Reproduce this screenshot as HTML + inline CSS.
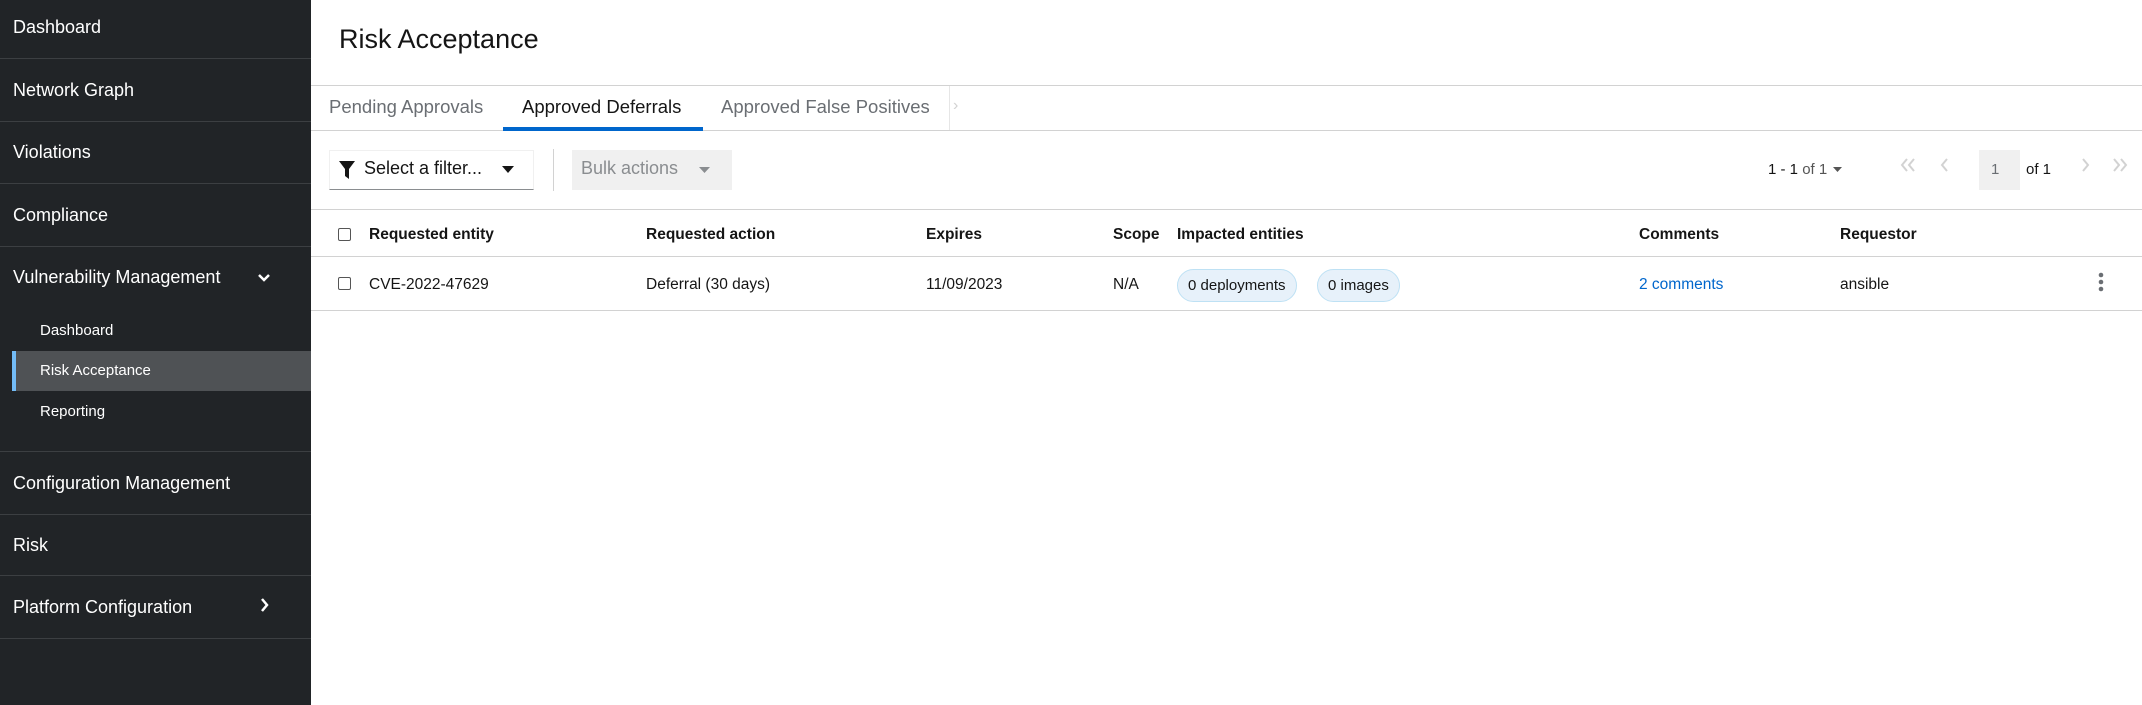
<!DOCTYPE html>
<html><head><meta charset="utf-8"><style>
*{box-sizing:border-box;margin:0;padding:0}
body{width:2142px;height:705px;overflow:hidden;font-family:"Liberation Sans",sans-serif;background:#fff;color:#151515;position:relative}
.sb{position:absolute;left:0;top:0;width:311px;height:705px;background:#212427;color:#fff}
.it{position:absolute;left:0;width:311px;border-bottom:1px solid #3c3f42;font-size:18px}
.it span{position:absolute;left:13px}
.sub{position:absolute;left:40px;font-size:15px;color:#fff}
.a{position:absolute}
.hd{font-size:15.5px;font-weight:bold}
.td{font-size:15.5px;color:#151515}
.chip{position:absolute;height:33px;border:1px solid #bee1f4;background:#e7f1fa;border-radius:17px;font-size:15px;line-height:31px;padding:0 10px;color:#151515;top:269px}
.cb{position:absolute;width:13px;height:13px;border:1px solid #555;border-radius:2px;left:338px}
.tab{position:absolute;top:96px;font-size:18.5px}
</style></head><body>
<div class="sb">
 <div class="it" style="top:0;height:59px"><span style="top:17px">Dashboard</span></div>
 <div class="it" style="top:59px;height:63px"><span style="top:21px">Network Graph</span></div>
 <div class="it" style="top:122px;height:62px"><span style="top:20px">Violations</span></div>
 <div class="it" style="top:184px;height:63px"><span style="top:21px">Compliance</span></div>
 <div class="it" style="top:247px;height:205px"><span style="top:20px">Vulnerability Management</span>
  <svg style="position:absolute;left:258px;top:26px" width="12" height="10" viewBox="0 0 12 10"><path d="M1 2l5 5 5-5" stroke="#fff" stroke-width="2.5" fill="none"/></svg></div>
 <div class="sub" style="top:322px">Dashboard</div>
 <div style="position:absolute;left:12px;top:351px;width:299px;height:40px;background:#4f5255;border-left:4px solid #73bcf7"></div>
 <div class="sub" style="top:362px">Risk Acceptance</div>
 <div class="sub" style="top:403px">Reporting</div>
 <div class="it" style="top:452px;height:63px"><span style="top:21px">Configuration Management</span></div>
 <div class="it" style="top:515px;height:61px"><span style="top:20px">Risk</span></div>
 <div class="it" style="top:576px;height:63px"><span style="top:21px">Platform Configuration</span>
  <svg style="position:absolute;left:260px;top:22px" width="10" height="14" viewBox="0 0 10 14"><path d="M2 1l5 6-5 6" stroke="#fff" stroke-width="2.5" fill="none"/></svg></div>
</div>
<div class="a" style="left:339px;top:24px;font-size:27px">Risk Acceptance</div>
<div class="a" style="left:311px;top:85px;width:1831px;height:1px;background:#d2d2d2"></div>
<div class="a" style="left:311px;top:130px;width:1831px;height:1px;background:#d2d2d2"></div>
<div class="tab" style="left:329px;color:#6a6e73">Pending Approvals</div>
<div class="tab" style="left:522px;color:#151515">Approved Deferrals</div>
<div class="tab" style="left:721px;color:#6a6e73">Approved False Positives</div>
<div class="a" style="left:503px;top:127px;width:200px;height:4px;background:#06c"></div>
<div class="a" style="left:949px;top:86px;width:1px;height:44px;background:#e6e6e6"></div>
<div class="a" style="left:953px;top:97px;font-size:16px;color:#d2d2d2">›</div>
<div class="a" style="left:329px;top:150px;width:205px;height:40px;border:1px solid #f0f0f0;border-bottom:1px solid #8a8d90"></div>
<svg class="a" style="left:338px;top:160px" width="18" height="20" viewBox="0 0 18 20"><path d="M1 1h16l-6 8v10l-4-3v-7z" fill="#151515"/></svg>
<div class="a" style="left:364px;top:158px;font-size:18px">Select a filter...</div>
<svg class="a" style="left:502px;top:166px" width="12" height="8"><path d="M0 0h12l-6 7z" fill="#151515"/></svg>
<div class="a" style="left:553px;top:149px;width:1px;height:42px;background:#d2d2d2"></div>
<div class="a" style="left:572px;top:150px;width:160px;height:40px;background:#f0f0f0"></div>
<div class="a" style="left:581px;top:158px;font-size:18px;color:#8a8d90">Bulk actions</div>
<svg class="a" style="left:699px;top:167px" width="11" height="7"><path d="M0 0h11l-5.5 6z" fill="#8a8d90"/></svg>
<div class="a" style="left:1768px;top:161px;font-size:15px">1 - 1 <span style="color:#555">of 1</span></div>
<svg class="a" style="left:1833px;top:167px" width="9" height="6"><path d="M0 0h9l-4.5 5z" fill="#555"/></svg>
<svg class="a" style="left:1900px;top:158px" width="16" height="14"><path d="M7 1l-5 6 5 6M14 1l-5 6 5 6" stroke="#d2d2d2" stroke-width="2" fill="none"/></svg>
<svg class="a" style="left:1940px;top:158px" width="10" height="14"><path d="M7 1l-5 6 5 6" stroke="#d2d2d2" stroke-width="2" fill="none"/></svg>
<div class="a" style="left:1979px;top:150px;width:41px;height:40px;background:#f0f0f0;font-size:15px;color:#6a6e73;padding:11px 0 0 12px">1</div>
<div class="a" style="left:2026px;top:161px;font-size:15px">of 1</div>
<svg class="a" style="left:2080px;top:158px" width="10" height="14"><path d="M3 1l5 6-5 6" stroke="#d2d2d2" stroke-width="2" fill="none"/></svg>
<svg class="a" style="left:2112px;top:158px" width="16" height="14"><path d="M2 1l5 6-5 6M9 1l5 6-5 6" stroke="#d2d2d2" stroke-width="2" fill="none"/></svg>
<div class="a" style="left:311px;top:209px;width:1831px;height:1px;background:#d2d2d2"></div>
<div class="a" style="left:311px;top:256px;width:1831px;height:1px;background:#d2d2d2"></div>
<div class="a" style="left:311px;top:310px;width:1831px;height:1px;background:#d2d2d2"></div>
<div class="cb" style="top:228px"></div>
<div class="a hd" style="left:369px;top:226px">Requested entity</div>
<div class="a hd" style="left:646px;top:226px">Requested action</div>
<div class="a hd" style="left:926px;top:226px">Expires</div>
<div class="a hd" style="left:1113px;top:226px">Scope</div>
<div class="a hd" style="left:1177px;top:226px">Impacted entities</div>
<div class="a hd" style="left:1639px;top:226px">Comments</div>
<div class="a hd" style="left:1840px;top:226px">Requestor</div>
<div class="cb" style="top:277px"></div>
<div class="a td" style="left:369px;top:276px">CVE-2022-47629</div>
<div class="a td" style="left:646px;top:276px">Deferral (30 days)</div>
<div class="a td" style="left:926px;top:276px">11/09/2023</div>
<div class="a td" style="left:1113px;top:276px">N/A</div>
<div class="chip" style="left:1177px">0 deployments</div>
<div class="chip" style="left:1317px">0 images</div>
<div class="a td" style="left:1639px;top:276px;color:#06c">2 comments</div>
<div class="a td" style="left:1840px;top:276px">ansible</div>
<svg class="a" style="left:2098px;top:272px" width="6" height="20"><circle cx="3" cy="3" r="2.3" fill="#6a6e73"/><circle cx="3" cy="10" r="2.3" fill="#6a6e73"/><circle cx="3" cy="17" r="2.3" fill="#6a6e73"/></svg>
</body></html>
